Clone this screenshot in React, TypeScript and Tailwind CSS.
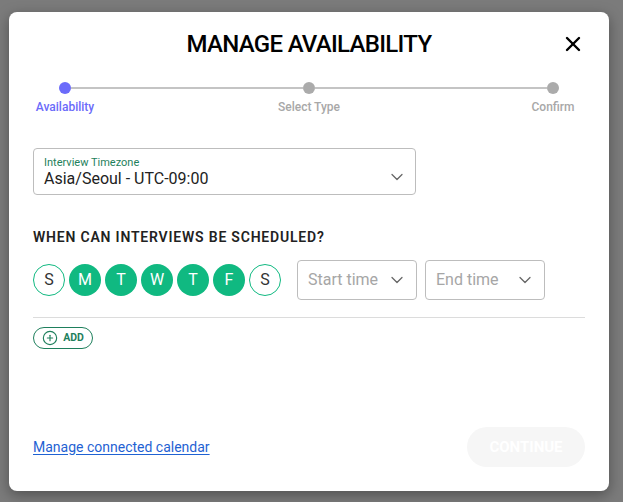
import React from 'react';
import { ChevronDown, X, CirclePlus } from 'lucide-react';

const days = [
  { label: 'S', on: false },
  { label: 'M', on: true },
  { label: 'T', on: true },
  { label: 'W', on: true },
  { label: 'T', on: true },
  { label: 'F', on: true },
  { label: 'S', on: false },
];

const steps = ['Availability', 'Select Type', 'Confirm'];

const App = () => {
  return (
    <div className="w-[623px] h-[502px] bg-[#7b7b7b] pt-[12px] pl-[9px] overflow-hidden" style={{ fontFamily: 'Roboto, "Open Sans", sans-serif' }}>
      <div className="w-[600px] h-[479px] bg-white rounded-[8px] shadow-[0_4px_14px_rgba(0,0,0,0.35)] px-6 pt-4 pb-6 flex flex-col">
        {/* Header */}
        <div className="relative flex items-center justify-center h-8">
          <h1 className="text-[24px] leading-8 font-medium text-black tracking-[-0.7px]">MANAGE AVAILABILITY</h1>
          <button className="absolute right-0 top-1/2 -translate-y-1/2 text-black">
            <X size={24} strokeWidth={2.4} />
          </button>
        </div>

        {/* Stepper */}
        <div className="mt-[22px]">
          <div className="flex items-center mx-[26px]">
            <div className="w-3 h-3 rounded-full bg-[#6b6bfa]" />
            <div className="flex-1 h-[2px] bg-[#c4c4c4]" />
            <div className="w-3 h-3 rounded-full bg-[#ababab]" />
            <div className="flex-1 h-[2px] bg-[#c4c4c4]" />
            <div className="w-3 h-3 rounded-full bg-[#ababab]" />
          </div>
          <div className="flex justify-between mt-[5px]">
            {steps.map((s, i) => (
              <div key={s} className="w-[64px] flex justify-center">
                <span className={`whitespace-nowrap text-[12px] leading-4 font-medium ${i === 0 ? 'text-[#6b6bfa]' : 'text-[#a8a8a8]'}`}>{s}</span>
              </div>
            ))}
          </div>
        </div>

        {/* Timezone select */}
        <div className="mt-[33px] w-[383px] h-[47px] border border-[#bdbdbd] rounded-[4px] px-[10px] flex items-center">
          <div className="flex-1">
            <div className="text-[11px] leading-[13px] text-[#1e7f5c] pt-[2px]">Interview Timezone</div>
            <div className="text-[16px] leading-5 text-[#222]">Asia/Seoul - UTC-09:00</div>
          </div>
          <ChevronDown size={20} strokeWidth={1.5} className="text-[#666] mt-[10px] -mr-[2px]" />
        </div>

        {/* Schedule */}
        <h2 className="mt-[32px] text-[14px] leading-5 font-semibold text-[#222] tracking-[0.8px]">WHEN CAN INTERVIEWS BE SCHEDULED?</h2>
        <div className="mt-[13px] flex items-center">
          <div className="flex gap-1">
            {days.map((d, i) => (
              <div
                key={i}
                className={`w-[32px] h-[32px] rounded-full flex items-center justify-center text-[16px] ${d.on ? 'bg-[#10b981] text-white' : 'border border-[#10b981] text-[#333]'}`}
              >
                {d.label}
              </div>
            ))}
          </div>
          <div className="ml-4 flex gap-[8px]">
            {['Start time', 'End time'].map(t => (
              <div key={t} className="w-[120px] h-[40px] border border-[#bdbdbd] rounded-[4px] pl-[10px] pr-[9px] flex items-center justify-between">
                <span className="text-[16px] text-[#a6a6a6]">{t}</span>
                <ChevronDown size={20} strokeWidth={1.5} className="text-[#666]" />
              </div>
            ))}
          </div>
        </div>
        <div className="mt-[17px] h-px bg-[#dcdcdc]" />
        <div className="mt-[9px]">
          <button className="h-[22px] w-[60px] rounded-full border border-[#1e7f5c] text-[#1e7f5c] flex items-center justify-center gap-[5px]">
            <CirclePlus size={16} strokeWidth={1.7} />
            <span className="text-[10.5px] font-bold leading-none">ADD</span>
          </button>
        </div>

        {/* Footer */}
        <div className="mt-auto flex items-center justify-between">
          <a className="text-[14px] text-[#1f62d3] underline underline-offset-2 cursor-pointer">Manage connected calendar</a>
          <button className="w-[118px] h-[40px] rounded-full bg-[#f6f6f6] text-white text-[15px] font-bold">CONTINUE</button>
        </div>
      </div>
    </div>
  );
};

export default App;
